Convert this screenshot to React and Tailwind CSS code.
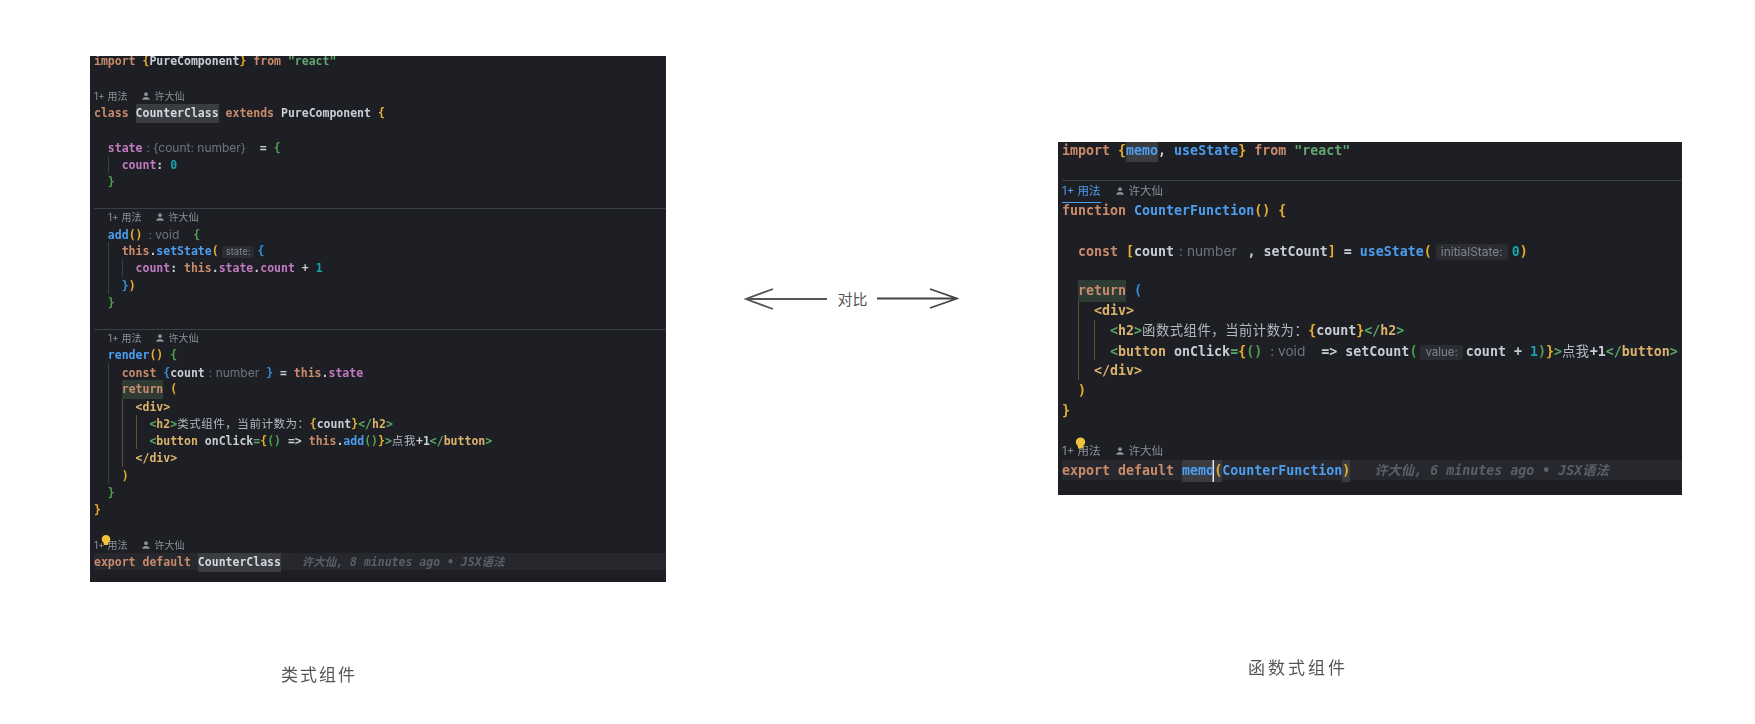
const c = {
  k: "text-[#c98b6b]",
  v: "text-[#c5cad3]",
  f: "text-[#4d9df0]",
  s: "text-[#62a56f]",
  y: "text-[#e6b02e]",
  g: "text-[#4e9f50]",
  b: "text-[#2f90e0]",
  p: "text-[#c27ac0]",
  n: "text-[#17a3a8]",
  t: "text-[#dcb36c]",
  a: "text-[#5aa869]",
  w: "text-[#c9cdd4]",
  z: "text-[#b4b8bf] font-normal tracking-[0.55px]",
};

function T({ parts }) {
  return parts.map(([text, key], i) => (
    <span key={i} className={c[key]}>
      {text}
    </span>
  ));
}

function Line({ parts = [], h, children, className = "" }) {
  return (
    <div className={`${h} whitespace-pre ${className}`}>
      <T parts={parts} />
      {children}
    </div>
  );
}

// 类型提示
function Hint({ children, className = "" }) {
  return <span className={`font-['Inter',sans-serif] font-normal text-[#6f747c] ${className}`}>{children}</span>;
}

function Pill({ children, className = "" }) {
  return (
    <span className={`inline-block rounded-[3px] bg-[#2b2d32] font-['Inter',sans-serif] font-normal text-[#80858d] leading-[1.3] ${className}`}>
      {children}
    </span>
  );
}

function Person({ size }) {
  return (
    <svg width={size} height={size} viewBox="0 0 16 16" className="inline-block align-[-1px]" fill="#8d9299">
      <circle cx="8" cy="5" r="3" />
      <path d="M2 14c0-3 2.5-4.5 6-4.5s6 1.500 6 4.500z" />
    </svg>
  );
}

function Lens({ h, sep, active, className = "", gap }) {
  return (
    <div
      className={`${h} relative whitespace-pre flex items-center pt-[2px] font-['Inter','Noto_Sans_CJK_SC',sans-serif] font-normal text-[#8b9097] ${sep ? "shadow-[inset_0_1px_0_#3b3e44]" : ""} ${className}`}
    >
      <span className={active ? "text-[#4d9df0] border-b border-[#4d9df0]" : ""}>1+ 用法</span>
      <span className={gap}>
        <Person size={10} />
      </span>
      <span className="ml-[4px]">许大仙</span>
    </div>
  );
}

function Bulb({ className }) {
  return (
    <svg viewBox="0 0 10 12" className={`absolute ${className}`} fill="#f2c23e">
      <path d="M5 0a4.200 4.200 0 0 0-2.600 7.500L3 10h4l.6-2.500A4.200 4.200 0 0 0 5 0z" />
    </svg>
  );
}

function Guide({ col, color, children }) {
  return <div className={`${col} ${color}`}>{children}</div>;
}

const GRAY = "shadow-[inset_1px_0_0_#3a3e45]";
const BLUE = "shadow-[inset_1px_0_0_#24425e]";
const GOLD = "shadow-[inset_1px_0_0_#5e5230]";

function ClassPanel() {
  const h = "h-[17.29px] leading-[19px]";
  return (
    <div className="w-[576px] h-[526px] overflow-hidden bg-[#1e1f24] pl-[4px] font-['DejaVu_Sans_Mono','Noto_Sans_CJK_SC',monospace] text-[11.5px] font-bold blur-[0.35px]">
      <Line h={`${h} -mt-[4px]`} parts={[["import ", "k"], ["{", "y"], ["PureComponent", "w"], ["}", "y"], [" from ", "k"], ['"react"', "s"]]} />
      <Line h={h} />
      <Lens h={h} gap="ml-[13px]" className="text-[10px]" />
      <Line h={h}>
        <T parts={[["class ", "k"]]} />
        <span className="inline-block bg-[#3a3c41] text-[#d5d8de]">CounterClass</span>
        <T parts={[[" extends ", "k"], ["PureComponent ", "w"], ["{", "y"]]} />
      </Line>
      <Line h={h} />
      <Line h={h}>
        <T parts={[["  state", "p"]]} />
        <Hint className="text-[12px] ml-[4px]">: {"{count: number}"}</Hint>
        <T parts={[["  = ", "w"], ["{", "g"]]} />
      </Line>
      <Guide col="ml-[2ch]" color={GRAY}>
        <Line h={h} parts={[["  count", "p"], [": ", "w"], ["0", "n"]]} />
      </Guide>
      <Line h={h} parts={[["  ", "w"], ["}", "g"]]} />
      <Line h={h} />
      <Lens h={h} sep gap="ml-[13px]" className="text-[10px] pl-[14px]" />
      <Line h={h}>
        <T parts={[["  add", "f"], ["()", "y"]]} />
        <Hint className="text-[12px] ml-[6px]">: void</Hint>
        <T parts={[["  ", "w"], ["{", "g"]]} />
      </Line>
      <Guide col="ml-[2ch]" color={GRAY}>
        <Line h={h}>
          <T parts={[["  this", "k"], [".", "w"], ["setState", "f"], ["(", "y"]]} />
          <Pill className="text-[9.500px] px-[4px] mx-[3px]">state:</Pill>
          <T parts={[["{", "b"]]} />
        </Line>
        <Guide col="ml-[2ch]" color={BLUE}>
          <Line h={h} parts={[["  count", "p"], [": ", "w"], ["this", "k"], [".", "w"], ["state", "p"], [".", "w"], ["count", "p"], [" + ", "w"], ["1", "n"]]} />
        </Guide>
        <Line h={h} parts={[["  ", "w"], ["}", "b"], [")", "y"]]} />
      </Guide>
      <Line h={h} parts={[["  ", "w"], ["}", "g"]]} />
      <Line h={h} />
      <Lens h={h} sep gap="ml-[13px]" className="text-[10px] pl-[14px]" />
      <Line h={h} parts={[["  render", "f"], ["()", "y"], [" ", "w"], ["{", "g"]]} />
      <Guide col="ml-[2ch]" color={GRAY}>
        <Line h={h}>
          <T parts={[["  const ", "k"], ["{", "b"], ["count", "w"]]} />
          <Hint className="text-[12px] ml-[4px]">: number</Hint>
          <T parts={[[" ", "w"], ["}", "b"], [" = ", "w"], ["this", "k"], [".", "w"], ["state", "p"]]} />
        </Line>
        <Line h={h}>
          <span>  </span>
          <span className="inline-block bg-[#2f3c33] text-[#c98b6b]">return</span>
          <T parts={[[" ", "w"], ["(", "y"]]} />
        </Line>
        <Guide col="ml-[2ch]" color={GOLD}>
          <Line h={h} parts={[["  ", "w"], ["<div>", "t"]]} />
          <Guide col="ml-[2ch]" color={GOLD}>
            <Line h={h} parts={[["  ", "w"], ["<", "a"], ["h2", "t"], [">", "a"], ["类式组件，当前计数为：", "z"], ["{", "y"], ["count", "w"], ["}", "y"], ["</", "a"], ["h2", "t"], [">", "a"]]} />
            <Line h={h} parts={[["  ", "w"], ["<", "a"], ["button ", "t"], ["onClick", "w"], ["=", "a"], ["{", "y"], ["()", "g"], [" => ", "w"], ["this", "k"], [".", "w"], ["add", "f"], ["()", "g"], ["}", "y"], [">", "a"], ["点我", "z"], ["+1", "w"], ["</", "a"], ["button", "t"], [">", "a"]]} />
          </Guide>
          <Line h={h} parts={[["  ", "w"], ["</div>", "t"]]} />
        </Guide>
        <Line h={h} parts={[["  ", "w"], [")", "y"]]} />
      </Guide>
      <Line h={h} parts={[["  ", "w"], ["}", "g"]]} />
      <Line h={h} parts={[["}", "y"]]} />
      <Line h={h} />
      <div className="relative">
        <Lens h={h} gap="ml-[13px]" className="text-[10px]" />
        <Bulb className="left-[7px] -top-[1px] w-[10px] h-[12px]" />
      </div>
      <Line h={h} className="bg-[#26282d]">
        <T parts={[["export default ", "k"]]} />
        <span className="inline-block bg-[#3a3c41] text-[#d5d8de]">CounterClass</span>
        <span className="italic text-[#5b6068]">   许大仙, 8 minutes ago • JSX语法</span>
      </Line>
    </div>
  );
}

function FunctionPanel() {
  const h = "h-[20px] leading-[22px]";
  return (
    <div className="w-[624px] h-[353px] overflow-hidden bg-[#1e1f24] pl-[4px] font-['DejaVu_Sans_Mono','Noto_Sans_CJK_SC',monospace] text-[13.3px] font-bold blur-[0.3px]">
      <Line h={`${h} -mt-[2px]`}>
        <T parts={[["import ", "k"], ["{", "y"]]} />
        <span className="inline-block bg-[#3a3c41] text-[#4d9df0]">memo</span>
        <T parts={[[", ", "w"], ["useState", "f"], ["}", "y"], [" from ", "k"], ['"react"', "s"]]} />
      </Line>
      <Line h={h} />
      <Lens h={h} sep active gap="ml-[14px]" className="text-[11.500px]" />
      <Line h={h} parts={[["function ", "k"], ["CounterFunction", "f"], ["()", "y"], [" ", "w"], ["{", "y"]]} />
      <Line h={h} />
      <Line h={h}>
        <T parts={[["  const ", "k"], ["[", "y"], ["count", "w"]]} />
        <Hint className="text-[13.7px] ml-[5px] mr-[3px]">: number</Hint>
        <T parts={[[" , setCount", "w"], ["]", "y"], [" = ", "w"], ["useState", "f"], ["(", "y"]]} />
        <Pill className="text-[12px] px-[5px] mx-[4px]">initialState:</Pill>
        <T parts={[["0", "n"], [")", "y"]]} />
      </Line>
      <Line h={h} />
      <Line h={h}>
        <span>  </span>
        <span className="inline-block bg-[#2f3c33] text-[#c98b6b]">return</span>
        <T parts={[[" ", "w"], ["(", "b"]]} />
      </Line>
      <Guide col="ml-[2ch]" color={GOLD}>
        <Line h={h} parts={[["  ", "w"], ["<div>", "t"]]} />
        <Guide col="ml-[2ch]" color={GOLD}>
          <Line h={h} parts={[["  ", "w"], ["<", "a"], ["h2", "t"], [">", "a"], ["函数式组件，当前计数为：", "z"], ["{", "y"], ["count", "w"], ["}", "y"], ["</", "a"], ["h2", "t"], [">", "a"]]} />
          <Line h={h}>
            <T parts={[["  ", "w"], ["<", "a"], ["button ", "t"], ["onClick", "w"], ["=", "a"], ["{", "y"], ["()", "g"]]} />
            <Hint className="text-[13.7px] ml-[8px]">: void</Hint>
            <T parts={[["  => ", "w"], ["setCount", "w"], ["(", "g"]]} />
            <Pill className="text-[11.500px] px-[5px] ml-[3px] mr-[3px]">value:</Pill>
            <T parts={[["count + ", "w"], ["1", "n"], [")", "g"], ["}", "y"], [">", "a"], ["点我", "z"], ["+1", "w"], ["</", "a"], ["button", "t"], [">", "a"]]} />
          </Line>
        </Guide>
        <Line h={h} parts={[["  ", "w"], ["</div>", "t"]]} />
      </Guide>
      <Line h={h} parts={[["  ", "w"], [")", "y"]]} />
      <Line h={h} parts={[["}", "y"]]} />
      <Line h={h} />
      <div className="relative">
        <Lens h={h} gap="ml-[14px]" className="text-[11.500px]" />
        <Bulb className="left-[13px] -top-[3px] w-[11px] h-[14px]" />
      </div>
      <Line h={h} className="bg-[#26282d]">
        <T parts={[["export default ", "k"]]} />
        <span className="inline-block bg-[#3a3c41] text-[#4d9df0] shadow-[inset_-1.500px_0_0_#e8e8e8]">memo</span>
        <span className="inline-block bg-[#3a3c41] text-[#e6b02e]">(</span>
        <T parts={[["CounterFunction", "f"]]} />
        <span className="inline-block bg-[#3a3c41] text-[#e6b02e]">)</span>
        <span className="italic text-[#5b6068]">   许大仙, 6 minutes ago • JSX语法</span>
      </Line>
    </div>
  );
}

function Compare() {
  return (
    <div className="ml-[78px] mt-[231px] w-[215px] h-[24px] flex items-center">
      <svg width="84" height="24" viewBox="0 0 84 24" fill="none" stroke="#555" strokeWidth="1.800" className="shrink-0">
        <path d="M83 12H2M29 2 2 12l27 10" />
      </svg>
      <span className="flex-1 text-center text-[15px] text-[#555] font-['Noto_Sans_CJK_SC',sans-serif]">对比</span>
      <svg width="82" height="24" viewBox="0 0 82 24" fill="none" stroke="#444" strokeWidth="1.800" className="shrink-0">
        <path d="M0 11.500h80M53 2l27 9.500L53 21" />
      </svg>
    </div>
  );
}

export default function App() {
  return (
    <div className="w-[1755px] h-[724px] overflow-hidden bg-white flex items-start pt-[56px] pl-[90px]">
      <div className="shrink-0">
        <ClassPanel />
        <div className="mt-[80px] ml-[191px] text-[17px] tracking-[2px] leading-[24px] text-[#555] blur-[0.4px] font-['Noto_Sans_CJK_SC',sans-serif]">类式组件</div>
      </div>
      <Compare />
      <div className="ml-[99px] mt-[86px] shrink-0">
        <FunctionPanel />
        <div className="mt-[160px] ml-[190px] text-[17px] tracking-[3px] leading-[24px] text-[#555] blur-[0.4px] font-['Noto_Sans_CJK_SC',sans-serif]">函数式组件</div>
      </div>
    </div>
  );
}
